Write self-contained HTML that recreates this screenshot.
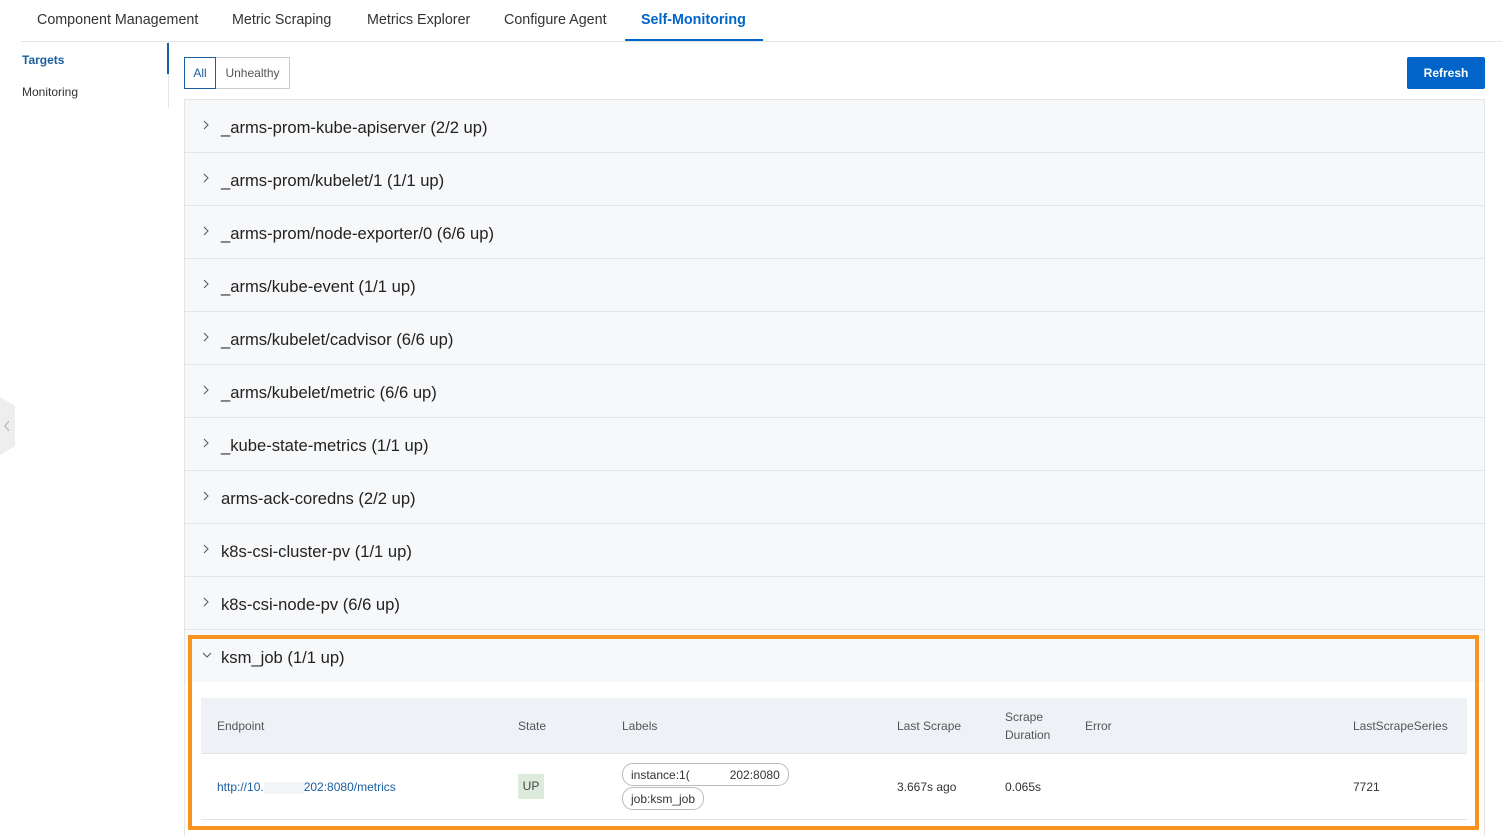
<!DOCTYPE html>
<html><head><meta charset="utf-8"><style>
*{box-sizing:border-box;margin:0;padding:0}
body{width:1502px;height:836px;overflow:hidden;background:#fff;font-family:"Liberation Sans",Arial,sans-serif;color:#333;position:relative}
.a{position:absolute}
.tab{position:absolute;top:12px;font-size:14.3px;color:#333}
.row{position:absolute;left:185px;width:1299px;height:53px;background:#f7f8fa;border-bottom:1px solid #e3e5e8;font-size:16.6px;color:#222}
.row .t{position:absolute;left:36px;top:18px}
.row svg{position:absolute;left:18px;top:20px}
.th{position:absolute;font-size:12px;color:#555}
.td{position:absolute;font-size:12px;color:#333}
.pill{position:absolute;border:1px solid #bbb;border-radius:11px;height:23px;font-size:12px;padding:4px 8px;color:#333;background:#fff}
</style></head><body>
<div class="tab" style="left:37px">Component Management</div>
<div class="tab" style="left:232px">Metric Scraping</div>
<div class="tab" style="left:367px">Metrics Explorer</div>
<div class="tab" style="left:504px">Configure Agent</div>
<div class="tab" style="left:641px;color:#0064c8;font-weight:bold">Self-Monitoring</div>
<div class="a" style="left:625px;top:39px;width:138px;height:2px;background:#0064c8"></div>
<div class="a" style="left:21px;top:41px;width:1481px;height:1px;background:#e5e5e5"></div>

<div class="a" style="left:22px;top:53px;font-size:12px;font-weight:bold;color:#1a5fa0">Targets</div>
<div class="a" style="left:22px;top:85px;font-size:12px;color:#333">Monitoring</div>
<div class="a" style="left:168px;top:42px;width:1px;height:66px;background:#e5e5e5"></div>
<div class="a" style="left:167px;top:43px;width:2px;height:31px;background:#1a5fa0"></div>

<div class="a" style="left:0;top:397px;width:15px;height:58px;background:#eee;clip-path:polygon(0 0,100% 15%,100% 85%,0 100%)"></div>
<svg class="a" style="left:3px;top:420px" width="8" height="12"><path d="M6 1L2 6L6 11" fill="none" stroke="#aaa" stroke-width="1"/></svg>

<div class="a" style="left:184px;top:57px;width:32px;height:32px;border:1px solid #1a5fa0;font-size:12px;color:#1a5fa0;text-align:center;line-height:30px">All</div>
<div class="a" style="left:216px;top:57px;width:74px;height:32px;border:1px solid #ccc;border-left:none;font-size:12px;color:#555;text-align:center;line-height:30px">Unhealthy</div>
<div class="a" style="left:1407px;top:57px;width:78px;height:32px;background:#0064c8;border-radius:2px;color:#fff;font-size:12px;font-weight:bold;text-align:center;line-height:32px">Refresh</div>

<div class="a" style="left:184px;top:99px;width:1301px;height:737px;border:1px solid #e3e5e8;border-bottom:none"></div>
<div class="row" style="top:100px"><svg width="6" height="10"><path d="M1 1L5 5L1 9" fill="none" stroke="#555" stroke-width="1"/></svg><span class="t">_arms-prom-kube-apiserver (2/2 up)</span></div>
<div class="row" style="top:153px"><svg width="6" height="10"><path d="M1 1L5 5L1 9" fill="none" stroke="#555" stroke-width="1"/></svg><span class="t">_arms-prom/kubelet/1 (1/1 up)</span></div>
<div class="row" style="top:206px"><svg width="6" height="10"><path d="M1 1L5 5L1 9" fill="none" stroke="#555" stroke-width="1"/></svg><span class="t">_arms-prom/node-exporter/0 (6/6 up)</span></div>
<div class="row" style="top:259px"><svg width="6" height="10"><path d="M1 1L5 5L1 9" fill="none" stroke="#555" stroke-width="1"/></svg><span class="t">_arms/kube-event (1/1 up)</span></div>
<div class="row" style="top:312px"><svg width="6" height="10"><path d="M1 1L5 5L1 9" fill="none" stroke="#555" stroke-width="1"/></svg><span class="t">_arms/kubelet/cadvisor (6/6 up)</span></div>
<div class="row" style="top:365px"><svg width="6" height="10"><path d="M1 1L5 5L1 9" fill="none" stroke="#555" stroke-width="1"/></svg><span class="t">_arms/kubelet/metric (6/6 up)</span></div>
<div class="row" style="top:418px"><svg width="6" height="10"><path d="M1 1L5 5L1 9" fill="none" stroke="#555" stroke-width="1"/></svg><span class="t">_kube-state-metrics (1/1 up)</span></div>
<div class="row" style="top:471px"><svg width="6" height="10"><path d="M1 1L5 5L1 9" fill="none" stroke="#555" stroke-width="1"/></svg><span class="t">arms-ack-coredns (2/2 up)</span></div>
<div class="row" style="top:524px"><svg width="6" height="10"><path d="M1 1L5 5L1 9" fill="none" stroke="#555" stroke-width="1"/></svg><span class="t">k8s-csi-cluster-pv (1/1 up)</span></div>
<div class="row" style="top:577px"><svg width="6" height="10"><path d="M1 1L5 5L1 9" fill="none" stroke="#555" stroke-width="1"/></svg><span class="t">k8s-csi-node-pv (6/6 up)</span></div>
<div class="row" style="top:630px;height:52px;border:none"><svg width="10" height="6" style="left:17px;top:22px"><path d="M1 1L5 5L9 1" fill="none" stroke="#555" stroke-width="1"/></svg><span class="t">ksm_job (1/1 up)</span></div>

<div class="a" style="left:201px;top:698px;width:1266px;height:56px;background:#eef1f6;border-bottom:1px solid #e3e5e8"></div>
<div class="th" style="left:217px;top:719px">Endpoint</div>
<div class="th" style="left:518px;top:719px">State</div>
<div class="th" style="left:622px;top:719px">Labels</div>
<div class="th" style="left:897px;top:719px">Last Scrape</div>
<div class="th" style="left:1005px;top:708px;line-height:18px">Scrape<br>Duration</div>
<div class="th" style="left:1085px;top:719px">Error</div>
<div class="th" style="left:1353px;top:719px">LastScrapeSeries</div>
<div class="a" style="left:201px;top:819px;width:1266px;height:1px;background:#e3e5e8"></div>
<div class="td" style="left:217px;top:780px;color:#1a5fa0">http://10.<span style="display:inline-block;width:40px;height:12px;background:#f3f5f8;vertical-align:middle"></span>202:8080/metrics</div>
<div class="a" style="left:518px;top:774px;width:26px;height:25px;background:#dcebdc;font-size:12px;text-align:center;line-height:25px;color:#444">UP</div>
<div class="pill" style="left:622px;top:763px">instance:1(<span style="display:inline-block;width:40px"></span>202:8080</div>
<div class="pill" style="left:622px;top:787px">job:ksm_job</div>
<div class="td" style="left:897px;top:780px">3.667s ago</div>
<div class="td" style="left:1005px;top:780px">0.065s</div>
<div class="td" style="left:1353px;top:780px">7721</div>

<div class="a" style="left:188px;top:635px;width:1291px;height:195px;border:4px solid #f7931e"></div>
</body></html>
